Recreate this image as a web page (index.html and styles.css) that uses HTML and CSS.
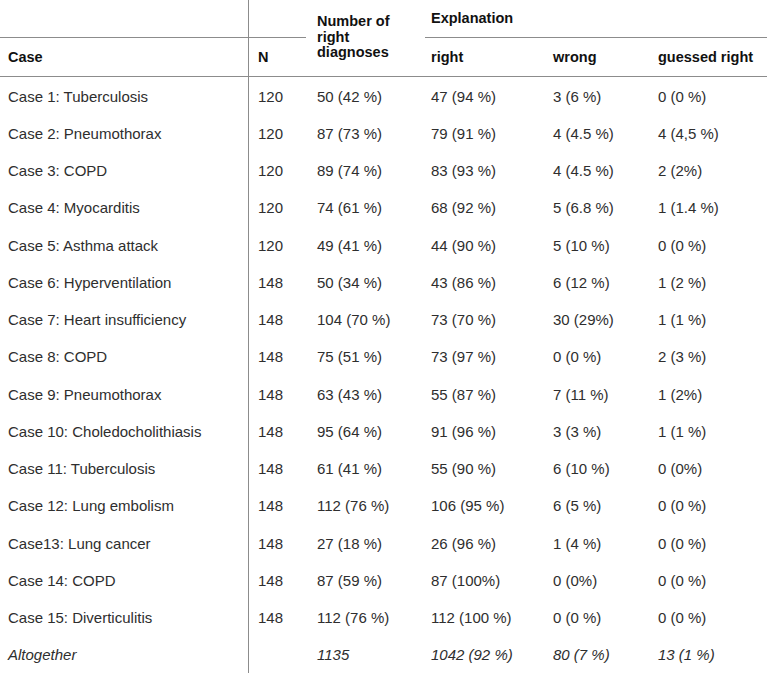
FILE: index.html
```html
<!DOCTYPE html>
<html lang="en">
<head>
<meta charset="utf-8">
<title>Diagnoses table</title>
<link rel="stylesheet" href="styles.css">
</head>
<body>
<table class="results">
  <colgroup>
    <col class="c-case">
    <col class="c-n">
    <col class="c-num">
    <col class="c-right">
    <col class="c-wrong">
    <col class="c-guess">
  </colgroup>
  <thead>
    <tr class="head-top">
      <th class="case-col line-under"></th>
      <th class="line-under line-short"></th>
      <th rowspan="2" class="num-head">Number of<br>right<br>diagnoses</th>
      <th colspan="3" class="expl-head">Explanation</th>
    </tr>
    <tr class="head-bottom">
      <th class="case-col">Case</th>
      <th>N</th>
      <th>right</th>
      <th>wrong</th>
      <th>guessed right</th>
    </tr>
  </thead>
  <tbody>
    <tr><td class="case-col">Case 1: Tuberculosis</td><td>120</td><td>50 (42 %)</td><td>47 (94 %)</td><td>3 (6 %)</td><td>0 (0 %)</td></tr>
    <tr><td class="case-col">Case 2: Pneumothorax</td><td>120</td><td>87 (73 %)</td><td>79 (91 %)</td><td>4 (4.5 %)</td><td>4 (4,5 %)</td></tr>
    <tr><td class="case-col">Case 3: COPD</td><td>120</td><td>89 (74 %)</td><td>83 (93 %)</td><td>4 (4.5 %)</td><td>2 (2%)</td></tr>
    <tr><td class="case-col">Case 4: Myocarditis</td><td>120</td><td>74 (61 %)</td><td>68 (92 %)</td><td>5 (6.8 %)</td><td>1 (1.4 %)</td></tr>
    <tr><td class="case-col">Case 5: Asthma attack</td><td>120</td><td>49 (41 %)</td><td>44 (90 %)</td><td>5 (10 %)</td><td>0 (0 %)</td></tr>
    <tr><td class="case-col">Case 6: Hyperventilation</td><td>148</td><td>50 (34 %)</td><td>43 (86 %)</td><td>6 (12 %)</td><td>1 (2 %)</td></tr>
    <tr><td class="case-col">Case 7: Heart insufficiency</td><td>148</td><td>104 (70 %)</td><td>73 (70 %)</td><td>30 (29%)</td><td>1 (1 %)</td></tr>
    <tr><td class="case-col">Case 8: COPD</td><td>148</td><td>75 (51 %)</td><td>73 (97 %)</td><td>0 (0 %)</td><td>2 (3 %)</td></tr>
    <tr><td class="case-col">Case 9: Pneumothorax</td><td>148</td><td>63 (43 %)</td><td>55 (87 %)</td><td>7 (11 %)</td><td>1 (2%)</td></tr>
    <tr><td class="case-col">Case 10: Choledocholithiasis</td><td>148</td><td>95 (64 %)</td><td>91 (96 %)</td><td>3 (3 %)</td><td>1 (1 %)</td></tr>
    <tr><td class="case-col">Case 11: Tuberculosis</td><td>148</td><td>61 (41 %)</td><td>55 (90 %)</td><td>6 (10 %)</td><td>0 (0%)</td></tr>
    <tr><td class="case-col">Case 12: Lung embolism</td><td>148</td><td>112 (76 %)</td><td>106 (95 %)</td><td>6 (5 %)</td><td>0 (0 %)</td></tr>
    <tr><td class="case-col">Case13: Lung cancer</td><td>148</td><td>27 (18 %)</td><td>26 (96 %)</td><td>1 (4 %)</td><td>0 (0 %)</td></tr>
    <tr><td class="case-col">Case 14: COPD</td><td>148</td><td>87 (59 %)</td><td>87 (100%)</td><td>0 (0%)</td><td>0 (0 %)</td></tr>
    <tr><td class="case-col">Case 15: Diverticulitis</td><td>148</td><td>112 (76 %)</td><td>112 (100 %)</td><td>0 (0 %)</td><td>0 (0 %)</td></tr>
    <tr class="total"><td class="case-col">Altogether</td><td></td><td>1135</td><td>1042 (92 %)</td><td>80 (7 %)</td><td>13 (1 %)</td></tr>
  </tbody>
</table>
</body>
</html>
```
FILE: styles.css
```css
html, body {
  margin: 0;
  padding: 0;
  background: #ffffff;
}

.results {
  width: 767px;
  table-layout: fixed;
  border-collapse: separate;
  border-spacing: 0;
  font-family: "Liberation Sans", Arial, sans-serif;
  font-size: 15px;
  line-height: 17px;
  color: #2e2e2e;
}

.c-case { width: 249px; }
.c-n { width: 59px; }
.c-num { width: 114px; }
.c-right { width: 122px; }
.c-wrong { width: 105px; }
.c-guess { width: 118px; }

.results th,
.results td {
  padding: 0 0 0 9px;
  text-align: left;
  vertical-align: middle;
  white-space: nowrap;
}

.results th {
  font-size: 14.5px;
  font-weight: bold;
  color: #111111;
}

.results .case-col {
  padding-left: 8px;
  border-right: 1px solid #8c8c8c;
}

.head-top {
  height: 38px;
}

.head-top th {
  padding-bottom: 1px;
}

.line-under {
  border-bottom: 1px solid #8c8c8c;
}

.line-short {
  border-bottom: 0;
  background: linear-gradient(#8c8c8c, #8c8c8c) no-repeat left bottom / calc(100% - 2px) 1px;
}

.expl-head {
  background: linear-gradient(#8c8c8c, #8c8c8c) no-repeat right bottom / calc(100% - 3px) 1px;
}

.num-head {
  line-height: 15.5px;
  border-bottom: 1px solid #8c8c8c;
}

.head-bottom {
  height: 39px;
}

.head-bottom th {
  border-bottom: 1px solid #8c8c8c;
}

.results tbody tr {
  height: 37.25px;
}

.results tbody td {
  padding-top: 1px;
}

.total td {
  font-style: italic;
}
```
